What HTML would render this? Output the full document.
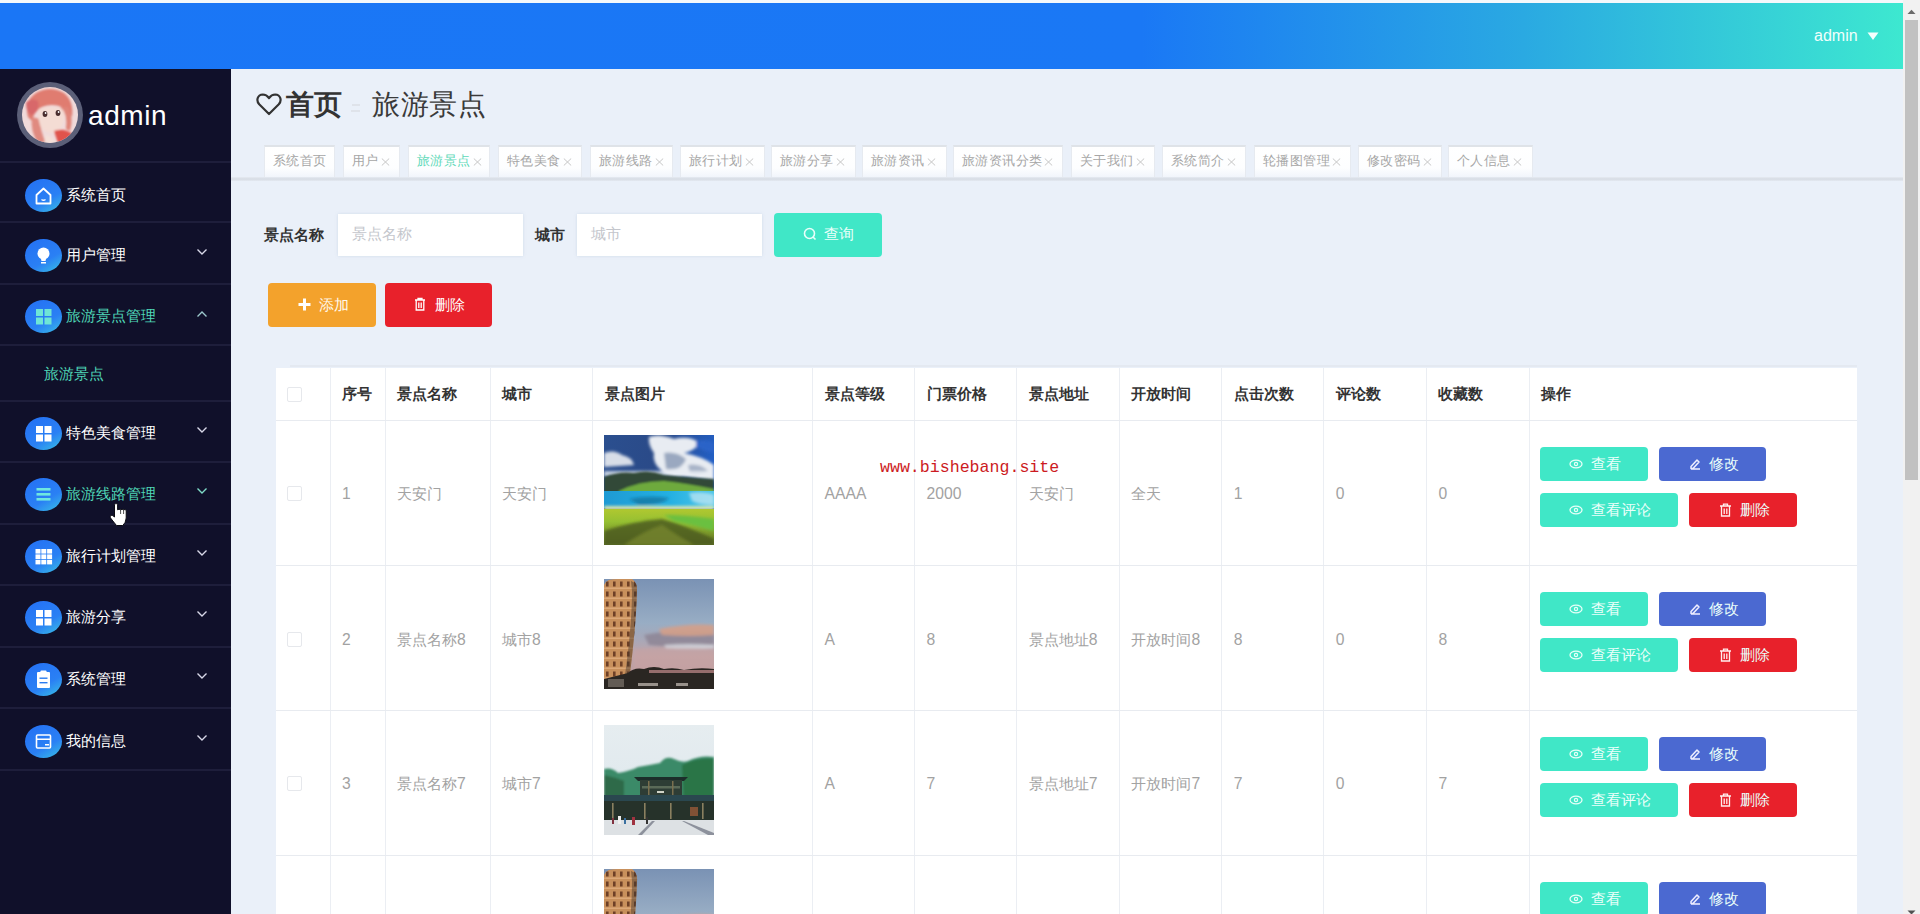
<!DOCTYPE html>
<html><head><meta charset="utf-8">
<style>
*{box-sizing:border-box;margin:0;padding:0}
html,body{width:1920px;height:914px;overflow:hidden}
body{position:relative;background:#eaf0f9;font-family:"Liberation Sans",sans-serif;color:#333}
.a{position:absolute}
#top{left:0;top:0;width:1903px;height:3px;background:#f4f8fb}
#hdr{left:0;top:3px;width:1903px;height:66px;background:linear-gradient(90deg,#1a76f6 0%,#1a78f5 60%,#2aa9e2 80%,#3de8d0 100%)}
#side{left:0;top:69px;width:231px;height:845px;background:#10102a}
.dv{left:0;width:231px;height:2px;background:#1e1e3b}
.ic{left:25px;width:37px;height:33px;border-radius:50%;background:linear-gradient(150deg,#2470f4 0%,#2a80f4 62%,#36b4e8 92%,#3ccce0 100%)}
.ic svg{position:absolute;left:0;top:0}
.mt{left:66px;font-size:15.3px;line-height:20px;color:#fff;white-space:nowrap;font-weight:500}
.mt.on{color:#4fd6b6}
.chev{left:196px}
#sb{left:1903px;top:0;width:17px;height:914px;background:#f1f1f1}
#thumb{left:1905px;top:20px;width:13px;height:460px;background:#c1c1c1}
.bc{font-size:28px;line-height:32px;white-space:nowrap}
.tab{top:145px;height:32px;background:linear-gradient(#fff 0%,#fdfeff 70%,#f1f5fb 100%);border:1px solid #e6eaf0;border-top:2px solid #dfe3e8;border-bottom:none;font-size:13px;letter-spacing:0.4px;line-height:28px;color:#a6a6a6;padding-left:8px;white-space:nowrap}
.tab.on{color:#5fd9b9}
.tab svg{display:inline-block;vertical-align:top;margin-top:11px;margin-left:2px}
#tabline{left:231px;top:177px;width:1672px;height:4px;background:linear-gradient(#e6ebf2,#d6dce4 50%,#e4e9f1)}
.lbl{font-size:15px;font-weight:bold;color:#333;line-height:20px;white-space:nowrap}
.inp{background:#fff;box-shadow:0 0 3px rgba(160,180,210,.35)}
.ph{font-size:15px;color:#c4c6cc;line-height:20px;white-space:nowrap}
.btn{border-radius:4px;color:#fff;font-size:15px;line-height:20px;white-space:nowrap;font-weight:500}
#tbl{left:276px;top:368px;width:1581px;height:546px;background:#fff}
.vl{top:368px;width:1px;height:546px;background:#ebeef3}
.hl{left:276px;width:1581px;height:1px;background:#e8ebf0}
.th{font-size:15px;font-weight:bold;color:#333;line-height:20px;white-space:nowrap}
.td{font-size:15px;color:#a2a2a2;line-height:20px;white-space:nowrap}
.cb{width:15px;height:15px;border:1px solid #e6e8ec;border-radius:2px;background:#fff}
.ab{height:34px;border-radius:4px;color:#eafffa;font-size:14.7px;line-height:34px;white-space:nowrap;font-weight:500}
.ab svg{position:absolute}
.teal{background:#40e7c7}
.blue{background:#4b69d1}
.red{background:#e8212b}
</style></head>
<body>
<div id="top" class="a"></div>
<div id="hdr" class="a"></div>
<div class="a" style="left:1814px;top:26px;color:#f0fffc;font-size:16px;line-height:20px">admin</div>
<svg class="a" style="left:1867px;top:32px" width="12" height="9"><path d="M0.5 0.5 L11.5 0.5 L6 8 Z" fill="#f4fffd"/></svg>
<div id="side" class="a"></div>
<div class="a" style="left:17px;top:82px;width:66px;height:66px;border-radius:50%;background:#5b5f78"></div>
<svg class="a" style="left:22px;top:87px" width="56" height="56" viewBox="0 0 56 56">
<defs><clipPath id="avc"><circle cx="28" cy="28" r="28"/></clipPath><filter id="avb"><feGaussianBlur stdDeviation="1.1"/></filter></defs>
<g clip-path="url(#avc)">
<rect width="56" height="56" fill="#f0dada"/>
<g filter="url(#avb)">
<path d="M6 30 Q2 14 14 6 Q28 -2 42 6 Q52 14 50 30 Q46 22 40 20 Q30 16 20 20 Q12 24 10 34Z" fill="#e07c70"/>
<path d="M4 16 Q8 10 16 14 Q18 24 10 28 Q4 26 4 16Z" fill="#d8686a"/>
<path d="M10 30 Q8 44 16 56 L24 56 Q18 44 18 32Z" fill="#e08a80"/>
<path d="M17 22 Q28 18 42 22 Q44 36 36 44 Q28 48 20 42 Q15 34 17 22Z" fill="#f4dcd4"/>
<path d="M38 20 Q46 26 44 42 L48 44 Q52 30 46 20Z" fill="#e08478"/>
<path d="M32 44 Q42 40 52 48 L56 56 L36 56Z" fill="#e0524c"/>
<path d="M24 48 Q30 50 34 56 L22 56Z" fill="#f4e0d8"/>
</g>
<ellipse cx="23" cy="27" rx="2.4" ry="3" fill="#4a2e30"/>
<ellipse cx="36" cy="26" rx="2.4" ry="3" fill="#4a2e30"/>
<circle cx="23.6" cy="26" r="0.9" fill="#fff"/><circle cx="36.6" cy="25" r="0.9" fill="#fff"/>
</g></svg>
<div class="a" style="left:88px;top:98px;color:#fff;font-size:28px;line-height:36px;letter-spacing:0.6px">admin</div>
<div class="a dv" style="top:161px"></div>
<div class="a dv" style="top:221px"></div>
<div class="a dv" style="top:283px"></div>
<div class="a dv" style="top:344px"></div>
<div class="a dv" style="top:400px"></div>
<div class="a dv" style="top:461px"></div>
<div class="a dv" style="top:523px"></div>
<div class="a dv" style="top:584px"></div>
<div class="a dv" style="top:646px"></div>
<div class="a dv" style="top:707px"></div>
<div class="a dv" style="top:769px"></div>
<div class="a ic" style="top:178.5px"><svg width="37" height="33" viewBox="0 1 37 33"><path d="M11.5 17 L18.5 10.5 L25.5 17 L25.5 25.5 L11.5 25.5 Z" fill="none" stroke="#fff" stroke-width="1.8" stroke-linejoin="round"/><path d="M16.5 21.5 Q18.5 23 20.5 21.5" fill="none" stroke="#fff" stroke-width="1.4"/></svg></div>
<div class="a mt" style="top:185px">系统首页</div>
<div class="a ic" style="top:238.5px"><svg width="37" height="33" viewBox="0 1 37 33"><circle cx="18.5" cy="15.5" r="6" fill="#fff"/><path d="M15.5 19 L21.5 19 L20.5 23 L16.5 23 Z" fill="#fff"/><rect x="16" y="24" width="5" height="1.5" fill="#fff"/></svg></div>
<div class="a mt" style="top:245px">用户管理</div>
<svg class="a chev" style="top:248px" width="12" height="8"><path d="M1.5 1.5 L6 6 L10.5 1.5" fill="none" stroke="#d8d8e8" stroke-width="1.4"/></svg>
<div class="a ic" style="top:299.5px"><svg width="37" height="33"><rect x="11" y="9" width="7" height="7" fill="#6ee6d6"/><rect x="19.5" y="9" width="7" height="7" fill="#6ee6d6"/><rect x="11" y="17.5" width="7" height="7" fill="#6ee6d6"/><rect x="19.5" y="17.5" width="7" height="7" fill="#6ee6d6"/></svg></div>
<div class="a mt on" style="top:306px">旅游景点管理</div>
<svg class="a chev" style="top:310px" width="12" height="8"><path d="M1.5 6.5 L6 2 L10.5 6.5" fill="none" stroke="#9cc8cc" stroke-width="1.4"/></svg>
<div class="a ic" style="top:416.5px"><svg width="37" height="33"><rect x="11" y="9" width="7" height="7" fill="#fff"/><rect x="19.5" y="9" width="7" height="7" fill="#fff"/><rect x="11" y="17.5" width="7" height="7" fill="#fff"/><rect x="19.5" y="17.5" width="7" height="7" fill="#fff"/></svg></div>
<div class="a mt" style="top:423px">特色美食管理</div>
<svg class="a chev" style="top:426px" width="12" height="8"><path d="M1.5 1.5 L6 6 L10.5 1.5" fill="none" stroke="#d8d8e8" stroke-width="1.4"/></svg>
<div class="a ic" style="top:477.5px"><svg width="37" height="33"><rect x="11.5" y="10" width="14" height="2.6" fill="#6ee8e0"/><rect x="11.5" y="15" width="14" height="2.6" fill="#6ee8e0"/><rect x="11.5" y="20" width="14" height="2.6" fill="#6ee8e0"/></svg></div>
<div class="a mt on" style="top:484px">旅游线路管理</div>
<svg class="a chev" style="top:487px" width="12" height="8"><path d="M1.5 1.5 L6 6 L10.5 1.5" fill="none" stroke="#7fdcc8" stroke-width="1.4"/></svg>
<div class="a ic" style="top:539.5px"><svg width="37" height="33"><g fill="#fff"><rect x="10.5" y="9" width="5" height="4.6"/><rect x="16.3" y="9" width="5" height="4.6"/><rect x="22.1" y="9" width="5" height="4.6"/><rect x="10.5" y="14.4" width="5" height="4.6"/><rect x="16.3" y="14.4" width="5" height="4.6"/><rect x="22.1" y="14.4" width="5" height="4.6"/><rect x="10.5" y="19.8" width="5" height="4.6"/><rect x="16.3" y="19.8" width="5" height="4.6"/><rect x="22.1" y="19.8" width="5" height="4.6"/></g></svg></div>
<div class="a mt" style="top:546px">旅行计划管理</div>
<svg class="a chev" style="top:549px" width="12" height="8"><path d="M1.5 1.5 L6 6 L10.5 1.5" fill="none" stroke="#d8d8e8" stroke-width="1.4"/></svg>
<div class="a ic" style="top:600.5px"><svg width="37" height="33"><rect x="11" y="9" width="7" height="7" fill="#fff"/><rect x="19.5" y="9" width="7" height="7" fill="#fff"/><rect x="11" y="17.5" width="7" height="7" fill="#fff"/><rect x="19.5" y="17.5" width="7" height="7" fill="#fff"/></svg></div>
<div class="a mt" style="top:607px">旅游分享</div>
<svg class="a chev" style="top:610px" width="12" height="8"><path d="M1.5 1.5 L6 6 L10.5 1.5" fill="none" stroke="#d8d8e8" stroke-width="1.4"/></svg>
<div class="a ic" style="top:662.5px"><svg width="37" height="33"><rect x="12" y="9" width="13" height="16" rx="1" fill="#fff"/><rect x="15.5" y="7.5" width="6" height="3" rx="0.8" fill="#fff"/><rect x="14.5" y="14.5" width="8" height="1.4" fill="#2a7cf0"/><rect x="14.5" y="19" width="8" height="1.4" fill="#2a7cf0"/></svg></div>
<div class="a mt" style="top:669px">系统管理</div>
<svg class="a chev" style="top:672px" width="12" height="8"><path d="M1.5 1.5 L6 6 L10.5 1.5" fill="none" stroke="#d8d8e8" stroke-width="1.4"/></svg>
<div class="a ic" style="top:724.5px"><svg width="37" height="33" viewBox="0 1 37 33"><rect x="11.5" y="11" width="14" height="13" rx="1" fill="none" stroke="#fff" stroke-width="1.6"/><rect x="11.5" y="14.5" width="14" height="1.5" fill="#fff"/><rect x="20" y="20" width="4" height="1.5" fill="#fff"/></svg></div>
<div class="a mt" style="top:731px">我的信息</div>
<svg class="a chev" style="top:734px" width="12" height="8"><path d="M1.5 1.5 L6 6 L10.5 1.5" fill="none" stroke="#d8d8e8" stroke-width="1.4"/></svg>
<div class="a mt on" style="left:44px;top:364px">旅游景点</div>
<svg class="a" style="left:108px;top:501px" width="20" height="26"><path d="M6.5 3.5 Q8 1.2 9.6 3.5 L9.6 8.8 Q11 7.6 12.6 8.8 Q14 7.6 15.6 8.8 Q17.2 7.8 18.2 9.6 L18.2 17 Q17.8 22 14.8 24.5 L8.5 24.5 Q6 21.5 2.4 16.8 Q1.6 15 3.2 14.4 Q4.6 14 6.5 16 Z" fill="#fff" stroke="#0a0a12" stroke-width="1"/><path d="M12.6 9 L12.6 13 M15.6 9 L15.6 13" stroke="#222" stroke-width="0.8"/></svg>
<svg class="a" style="left:256px;top:93px" width="26" height="23"><path d="M13 21 L3.2 11.3 Q0.8 8.5 1.6 5.4 Q2.8 1.6 6.8 1.5 Q10.5 1.6 13 5 Q15.5 1.6 19.2 1.5 Q23.2 1.6 24.4 5.4 Q25.2 8.5 22.8 11.3 Z" fill="none" stroke="#333" stroke-width="2.2" stroke-linejoin="round"/></svg>
<div class="a bc" style="left:286px;top:89px;font-weight:bold;color:#333">首页</div>
<div class="a" style="left:352px;top:104px;width:8px;height:1.5px;background:#dfe3ea"></div><div class="a" style="left:351px;top:110px;width:9px;height:1.5px;background:#dfe3ea"></div>
<div class="a bc" style="left:372px;top:89px;color:#3a3a3a;letter-spacing:0.5px">旅游景点</div>
<div id="tabline" class="a"></div>
<div class="a tab" style="left:264px;width:71px">系统首页</div>
<div class="a tab" style="left:343px;width:57px">用户<svg width="9" height="8"><path d="M0.8 0.5 L8.2 7.5 M8.2 0.5 L0.8 7.5" stroke="#c6c6c6" stroke-width="1"/></svg></div>
<div class="a tab on" style="left:408px;width:82px">旅游景点<svg width="9" height="8"><path d="M0.8 0.5 L8.2 7.5 M8.2 0.5 L0.8 7.5" stroke="#c6c6c6" stroke-width="1"/></svg></div>
<div class="a tab" style="left:498px;width:84px">特色美食<svg width="9" height="8"><path d="M0.8 0.5 L8.2 7.5 M8.2 0.5 L0.8 7.5" stroke="#c6c6c6" stroke-width="1"/></svg></div>
<div class="a tab" style="left:590px;width:83px">旅游线路<svg width="9" height="8"><path d="M0.8 0.5 L8.2 7.5 M8.2 0.5 L0.8 7.5" stroke="#c6c6c6" stroke-width="1"/></svg></div>
<div class="a tab" style="left:680px;width:85px">旅行计划<svg width="9" height="8"><path d="M0.8 0.5 L8.2 7.5 M8.2 0.5 L0.8 7.5" stroke="#c6c6c6" stroke-width="1"/></svg></div>
<div class="a tab" style="left:771px;width:85px">旅游分享<svg width="9" height="8"><path d="M0.8 0.5 L8.2 7.5 M8.2 0.5 L0.8 7.5" stroke="#c6c6c6" stroke-width="1"/></svg></div>
<div class="a tab" style="left:862px;width:85px">旅游资讯<svg width="9" height="8"><path d="M0.8 0.5 L8.2 7.5 M8.2 0.5 L0.8 7.5" stroke="#c6c6c6" stroke-width="1"/></svg></div>
<div class="a tab" style="left:953px;width:110px">旅游资讯分类<svg width="9" height="8"><path d="M0.8 0.5 L8.2 7.5 M8.2 0.5 L0.8 7.5" stroke="#c6c6c6" stroke-width="1"/></svg></div>
<div class="a tab" style="left:1071px;width:84px">关于我们<svg width="9" height="8"><path d="M0.8 0.5 L8.2 7.5 M8.2 0.5 L0.8 7.5" stroke="#c6c6c6" stroke-width="1"/></svg></div>
<div class="a tab" style="left:1162px;width:84px">系统简介<svg width="9" height="8"><path d="M0.8 0.5 L8.2 7.5 M8.2 0.5 L0.8 7.5" stroke="#c6c6c6" stroke-width="1"/></svg></div>
<div class="a tab" style="left:1254px;width:97px">轮播图管理<svg width="9" height="8"><path d="M0.8 0.5 L8.2 7.5 M8.2 0.5 L0.8 7.5" stroke="#c6c6c6" stroke-width="1"/></svg></div>
<div class="a tab" style="left:1358px;width:84px">修改密码<svg width="9" height="8"><path d="M0.8 0.5 L8.2 7.5 M8.2 0.5 L0.8 7.5" stroke="#c6c6c6" stroke-width="1"/></svg></div>
<div class="a tab" style="left:1448px;width:85px">个人信息<svg width="9" height="8"><path d="M0.8 0.5 L8.2 7.5 M8.2 0.5 L0.8 7.5" stroke="#c6c6c6" stroke-width="1"/></svg></div>
<div class="a lbl" style="left:264px;top:225px">景点名称</div>
<div class="a inp" style="left:338px;top:214px;width:185px;height:42px"></div>
<div class="a ph" style="left:352px;top:224px">景点名称</div>
<div class="a lbl" style="left:535px;top:225px">城市</div>
<div class="a inp" style="left:577px;top:214px;width:185px;height:42px"></div>
<div class="a ph" style="left:591px;top:224px">城市</div>
<div class="a btn teal" style="left:774px;top:213px;width:108px;height:44px"></div>
<svg class="a" style="left:803px;top:227px" width="14" height="15"><circle cx="6.5" cy="6.5" r="5" fill="none" stroke="#e8fffa" stroke-width="1.6"/><path d="M10 10 L12.5 12.5" stroke="#e8fffa" stroke-width="1.6"/></svg>
<div class="a btn" style="left:824px;top:224px;color:#eafffa">查询</div>
<div class="a btn" style="left:268px;top:283px;width:108px;height:44px;background:#f3a22c"></div>
<svg class="a" style="left:297px;top:297px" width="15" height="15"><path d="M7.5 1.5 L7.5 13.5 M1.5 7.5 L13.5 7.5" stroke="#fff" stroke-width="3"/></svg>
<div class="a btn" style="left:319px;top:295px;color:#fff8ec">添加</div>
<div class="a btn" style="left:385px;top:283px;width:107px;height:44px;background:#e8212b"></div>
<svg class="a" style="left:414px;top:297px" width="12" height="14"><path d="M1 3 L11 3 M4 3 L4 1.5 L8 1.5 L8 3 M2.2 3 L2.2 13 L9.8 13 L9.8 3 M4.8 5.5 L4.8 11 M7.2 5.5 L7.2 11" fill="none" stroke="#fff" stroke-width="1.3"/></svg>
<div class="a btn" style="left:435px;top:295px;color:#fff">删除</div>
<div class="a" style="left:290px;top:365px;width:1567px;height:2px;background:#e4e9f1"></div>
<div id="tbl" class="a"></div>
<div class="a vl" style="left:329.5px"></div>
<div class="a vl" style="left:384.5px"></div>
<div class="a vl" style="left:489.5px"></div>
<div class="a vl" style="left:592.2px"></div>
<div class="a vl" style="left:812.0px"></div>
<div class="a vl" style="left:914.0px"></div>
<div class="a vl" style="left:1016.3px"></div>
<div class="a vl" style="left:1118.9px"></div>
<div class="a vl" style="left:1221.3px"></div>
<div class="a vl" style="left:1323.3px"></div>
<div class="a vl" style="left:1425.9px"></div>
<div class="a vl" style="left:1528.5px"></div>
<div class="a hl" style="top:420px"></div>
<div class="a hl" style="top:565px"></div>
<div class="a hl" style="top:710px"></div>
<div class="a hl" style="top:855px"></div>
<div class="a cb" style="left:287px;top:387px"></div>
<div class="a th" style="left:342.0px;top:384px">序号</div>
<div class="a th" style="left:397.0px;top:384px">景点名称</div>
<div class="a th" style="left:502.0px;top:384px">城市</div>
<div class="a th" style="left:604.7px;top:384px">景点图片</div>
<div class="a th" style="left:824.5px;top:384px">景点等级</div>
<div class="a th" style="left:926.5px;top:384px">门票价格</div>
<div class="a th" style="left:1028.8px;top:384px">景点地址</div>
<div class="a th" style="left:1131.4px;top:384px">开放时间</div>
<div class="a th" style="left:1233.8px;top:384px">点击次数</div>
<div class="a th" style="left:1335.8px;top:384px">评论数</div>
<div class="a th" style="left:1438.4px;top:384px">收藏数</div>
<div class="a th" style="left:1541.0px;top:384px">操作</div>
<div class="a cb" style="left:287px;top:486px"></div>
<div class="a td" style="left:342.0px;top:484px"><span style="font-size:15.7px">1</span></div>
<div class="a td" style="left:397.0px;top:484px">天安门</div>
<div class="a td" style="left:502.0px;top:484px">天安门</div>
<div class="a td" style="left:824.5px;top:484px"><span style="font-size:15.7px">AAAA</span></div>
<div class="a td" style="left:926.5px;top:484px"><span style="font-size:15.7px">2000</span></div>
<div class="a td" style="left:1028.8px;top:484px">天安门</div>
<div class="a td" style="left:1131.4px;top:484px">全天</div>
<div class="a td" style="left:1233.8px;top:484px"><span style="font-size:15.7px">1</span></div>
<div class="a td" style="left:1335.8px;top:484px"><span style="font-size:15.7px">0</span></div>
<div class="a td" style="left:1438.4px;top:484px"><span style="font-size:15.7px">0</span></div>
<div class="a cb" style="left:287px;top:632px"></div>
<div class="a td" style="left:342.0px;top:630px"><span style="font-size:15.7px">2</span></div>
<div class="a td" style="left:397.0px;top:630px">景点名称<span style="font-size:15.7px">8</span></div>
<div class="a td" style="left:502.0px;top:630px">城市<span style="font-size:15.7px">8</span></div>
<div class="a td" style="left:824.5px;top:630px"><span style="font-size:15.7px">A</span></div>
<div class="a td" style="left:926.5px;top:630px"><span style="font-size:15.7px">8</span></div>
<div class="a td" style="left:1028.8px;top:630px">景点地址<span style="font-size:15.7px">8</span></div>
<div class="a td" style="left:1131.4px;top:630px">开放时间<span style="font-size:15.7px">8</span></div>
<div class="a td" style="left:1233.8px;top:630px"><span style="font-size:15.7px">8</span></div>
<div class="a td" style="left:1335.8px;top:630px"><span style="font-size:15.7px">0</span></div>
<div class="a td" style="left:1438.4px;top:630px"><span style="font-size:15.7px">8</span></div>
<div class="a cb" style="left:287px;top:776px"></div>
<div class="a td" style="left:342.0px;top:774px"><span style="font-size:15.7px">3</span></div>
<div class="a td" style="left:397.0px;top:774px">景点名称<span style="font-size:15.7px">7</span></div>
<div class="a td" style="left:502.0px;top:774px">城市<span style="font-size:15.7px">7</span></div>
<div class="a td" style="left:824.5px;top:774px"><span style="font-size:15.7px">A</span></div>
<div class="a td" style="left:926.5px;top:774px"><span style="font-size:15.7px">7</span></div>
<div class="a td" style="left:1028.8px;top:774px">景点地址<span style="font-size:15.7px">7</span></div>
<div class="a td" style="left:1131.4px;top:774px">开放时间<span style="font-size:15.7px">7</span></div>
<div class="a td" style="left:1233.8px;top:774px"><span style="font-size:15.7px">7</span></div>
<div class="a td" style="left:1335.8px;top:774px"><span style="font-size:15.7px">0</span></div>
<div class="a td" style="left:1438.4px;top:774px"><span style="font-size:15.7px">7</span></div>
<div class="a" style="left:604px;top:435px;width:110px;height:110px;overflow:hidden"><svg width="110" height="110" viewBox="0 0 110 110">
<defs><filter id="bl1" x="-20%" y="-20%" width="140%" height="140%"><feGaussianBlur stdDeviation="1.6"/></filter>
<filter id="bl2"><feGaussianBlur stdDeviation="0.8"/></filter>
<linearGradient id="lsky" x1="0" y1="0" x2="1" y2="0.3"><stop offset="0" stop-color="#2b4f8f"/><stop offset="0.5" stop-color="#2a4a88"/><stop offset="1" stop-color="#2260c8"/></linearGradient>
<linearGradient id="llake" x1="0" y1="0" x2="1" y2="0"><stop offset="0" stop-color="#1e9ad4"/><stop offset="0.6" stop-color="#24b0e2"/><stop offset="1" stop-color="#50c6e8"/></linearGradient>
<linearGradient id="lgr" x1="0" y1="0" x2="0" y2="1"><stop offset="0" stop-color="#b0c830"/><stop offset="0.35" stop-color="#96c032"/><stop offset="1" stop-color="#5e6e22"/></linearGradient>
</defs>
<rect width="110" height="110" fill="url(#lsky)"/>
<g filter="url(#bl1)">
<path d="M45 2 Q55 -2 70 4 Q85 0 96 8 Q90 16 80 18 Q100 22 110 30 L110 46 Q95 44 80 42 Q65 44 58 36 Q48 28 50 18 Q44 10 45 2Z" fill="#e8ecf2"/>
<path d="M60 18 Q72 16 82 24 Q78 36 62 34Z" fill="#9aa8c0"/>
<path d="M84 30 Q96 28 104 36 Q96 40 86 38Z" fill="#a8b4c8"/>
<path d="M92 6 Q104 4 110 8 L110 18 Q100 16 92 12Z" fill="#2a64c8"/>
<path d="M0 18 Q10 14 18 20 Q28 22 30 30 L0 32Z" fill="#d8dee8"/>
<rect x="0" y="36" width="110" height="6" fill="#e8eef4" opacity="0.8"/>
</g>
<g filter="url(#bl2)">
<path d="M0 42 Q15 36 30 38 Q45 34 60 40 Q80 42 110 44 L110 58 L0 58Z" fill="#304a38"/>
<path d="M15 56 Q35 46 60 46 Q80 48 110 54 L110 58 L15 58Z" fill="#6eaa3c"/>
</g>
<rect x="0" y="56" width="110" height="17" fill="url(#llake)"/>
<g filter="url(#bl1)">
<path d="M25 64 Q45 60 65 63 Q60 70 35 70Z" fill="#16709a" opacity="0.7"/>
<path d="M85 58 Q100 56 110 60 L110 70 Q95 70 88 66Z" fill="#c8e8f4" opacity="0.7"/>
<rect x="0" y="71" width="110" height="4" fill="#d8e4b0"/>
</g>
<rect x="0" y="74" width="110" height="36" fill="url(#lgr)"/>
<g filter="url(#bl1)">
<path d="M60 80 Q80 80 110 84 L110 96 Q90 90 70 86Z" fill="#6ac040"/>
<path d="M0 96 Q30 86 58 84 Q80 90 110 104 L110 110 L0 110Z" fill="#4c5c1c" opacity="0.85"/>
<path d="M20 110 Q40 96 58 90 Q72 100 90 110Z" fill="#7a8a30" opacity="0.7"/>
</g>
</svg></div>
<div class="a" style="left:604px;top:579px;width:110px;height:110px;overflow:hidden"><svg width="110" height="110" viewBox="0 0 110 110">
<defs><filter id="p579b1" x="-20%" y="-20%" width="140%" height="140%"><feGaussianBlur stdDeviation="1.5"/></filter>
<filter id="p579b2"><feGaussianBlur stdDeviation="0.45"/></filter>
<linearGradient id="p579sky" x1="0" y1="0" x2="0" y2="1"><stop offset="0" stop-color="#7a92b4"/><stop offset="0.4" stop-color="#98adc4"/><stop offset="0.55" stop-color="#a8a8b8"/><stop offset="0.7" stop-color="#c0a4a8"/><stop offset="1" stop-color="#b89a9a"/></linearGradient>
<pattern id="p579tw" width="7" height="10" patternUnits="userSpaceOnUse"><rect width="7" height="10" fill="#c8905c"/><rect x="2" y="2.5" width="2.6" height="5" fill="#6e4028"/><rect y="8.5" width="7" height="1.5" fill="#dca878"/></pattern>
</defs>
<rect width="110" height="110" fill="url(#p579sky)"/>
<g filter="url(#p579b1)">
<path d="M40 56 Q70 50 110 52 L110 66 Q80 70 45 66Z" fill="#8a8090" opacity="0.75"/>
<path d="M55 50 Q85 44 110 46 L110 56 Q85 58 58 56Z" fill="#d4a08a" opacity="0.9"/>
<path d="M30 70 Q70 66 110 70 L110 92 L30 92Z" fill="#c8a2a2" opacity="0.6"/>
<path d="M60 66 Q85 64 110 66 L110 69 Q85 70 62 69Z" fill="#e0e4ea" opacity="0.7"/>
</g>
<g filter="url(#p579b2)">
<path d="M0 3 Q4 0 14 0 L28 0 Q34 4 33 12 Q32 50 24 110 L0 110Z" fill="url(#p579tw)"/>
<path d="M27 2 Q34 4 33 12 Q32 50 24 110 L19 110 Q28 50 28 12Z" fill="#40342a" opacity="0.45"/>
<path d="M0 0 L6 0 Q2 2 0 6Z" fill="#7a92b4"/>
</g>
<g filter="url(#p579b2)">
<path d="M24 94 Q30 88 40 90 Q50 86 60 90 Q70 88 80 91 Q95 88 110 90 L110 110 L0 110 L0 100Z" fill="#2c2622"/>
<rect x="45" y="91" width="65" height="3" fill="#b08080" opacity="0.8"/>
<rect x="34" y="104" width="20" height="3" fill="#c8c0b8" opacity="0.7"/>
<rect x="72" y="104" width="12" height="3" fill="#c8c0b8" opacity="0.7"/>
<rect x="4" y="100" width="16" height="8" fill="#8a8078" opacity="0.6"/>
</g>
</svg></div>
<div class="a" style="left:604px;top:725px;width:110px;height:110px;overflow:hidden"><svg width="110" height="110" viewBox="0 0 110 110">
<defs><filter id="tb1" x="-20%" y="-20%" width="140%" height="140%"><feGaussianBlur stdDeviation="1.2"/></filter>
<filter id="tb2"><feGaussianBlur stdDeviation="0.45"/></filter>
<linearGradient id="tsky" x1="0" y1="0" x2="0" y2="1"><stop offset="0" stop-color="#e6edf0"/><stop offset="1" stop-color="#dce6ec"/></linearGradient>
</defs>
<rect width="110" height="110" fill="url(#tsky)"/>
<g filter="url(#tb1)">
<path d="M0 44 Q8 42 14 48 Q26 46 34 42 Q46 40 56 38 Q62 30 70 34 Q78 38 84 36 Q96 30 110 32 L110 80 L0 80Z" fill="#3a8a68"/>
<path d="M78 40 Q95 32 110 34 L110 80 L80 80Z" fill="#2a7446"/>
<path d="M0 50 Q10 52 20 56 L20 80 L0 80Z" fill="#2e6a48"/>
</g>
<g filter="url(#tb2)">
<path d="M30 52 L84 52 L80 56 L34 56Z" fill="#1e2e2a"/>
<rect x="36" y="55" width="42" height="18" fill="#2e3c34"/>
<rect x="38" y="61" width="38" height="2.5" fill="#5a6a58"/>
<rect x="44" y="56" width="1.5" height="16" fill="#7a7050"/><rect x="68" y="56" width="1.5" height="16" fill="#7a7050"/>
<rect x="53" y="66" width="7" height="2" fill="#d0d4c8"/>
<path d="M0 70 L110 70 L110 76 L0 76Z" fill="#2a4650"/>
<rect x="0" y="76" width="110" height="20" fill="#26302a"/>
<rect x="8" y="78" width="1.6" height="16" fill="#8a8060"/><rect x="40" y="78" width="1.6" height="16" fill="#8a8060"/>
<rect x="66" y="78" width="1.6" height="16" fill="#8a8060"/><rect x="98" y="78" width="1.6" height="16" fill="#8a8060"/>
<rect x="86" y="82" width="8" height="9" fill="#a8603a" opacity="0.7"/>
</g>
<rect x="0" y="95" width="110" height="15" fill="#dde1e4"/>
<g filter="url(#tb2)">
<path d="M34 110 L48 96 L51 96 L38 110Z" fill="#4a5060" opacity="0.55"/>
<path d="M80 96 L110 108 L110 110 L104 110 L78 96Z" fill="#4a5060" opacity="0.55"/>
<rect x="14" y="91" width="3" height="8" fill="#f0f0f0"/>
<rect x="20" y="93" width="2" height="6" fill="#3a70a0"/>
<rect x="28" y="92" width="3" height="8" fill="#a03040"/>
<rect x="42" y="92" width="2" height="7" fill="#303030"/>
<rect x="8" y="93" width="2" height="6" fill="#803040"/>
</g>
</svg></div>
<div class="a" style="left:604px;top:869px;width:110px;height:110px;overflow:hidden"><svg width="110" height="110" viewBox="0 0 110 110">
<defs><filter id="p869b1" x="-20%" y="-20%" width="140%" height="140%"><feGaussianBlur stdDeviation="1.5"/></filter>
<filter id="p869b2"><feGaussianBlur stdDeviation="0.45"/></filter>
<linearGradient id="p869sky" x1="0" y1="0" x2="0" y2="1"><stop offset="0" stop-color="#7a92b4"/><stop offset="0.4" stop-color="#98adc4"/><stop offset="0.55" stop-color="#a8a8b8"/><stop offset="0.7" stop-color="#c0a4a8"/><stop offset="1" stop-color="#b89a9a"/></linearGradient>
<pattern id="p869tw" width="7" height="10" patternUnits="userSpaceOnUse"><rect width="7" height="10" fill="#c8905c"/><rect x="2" y="2.5" width="2.6" height="5" fill="#6e4028"/><rect y="8.5" width="7" height="1.5" fill="#dca878"/></pattern>
</defs>
<rect width="110" height="110" fill="url(#p869sky)"/>
<g filter="url(#p869b1)">
<path d="M40 56 Q70 50 110 52 L110 66 Q80 70 45 66Z" fill="#8a8090" opacity="0.75"/>
<path d="M55 50 Q85 44 110 46 L110 56 Q85 58 58 56Z" fill="#d4a08a" opacity="0.9"/>
<path d="M30 70 Q70 66 110 70 L110 92 L30 92Z" fill="#c8a2a2" opacity="0.6"/>
<path d="M60 66 Q85 64 110 66 L110 69 Q85 70 62 69Z" fill="#e0e4ea" opacity="0.7"/>
</g>
<g filter="url(#p869b2)">
<path d="M0 3 Q4 0 14 0 L28 0 Q34 4 33 12 Q32 50 24 110 L0 110Z" fill="url(#p869tw)"/>
<path d="M27 2 Q34 4 33 12 Q32 50 24 110 L19 110 Q28 50 28 12Z" fill="#40342a" opacity="0.45"/>
<path d="M0 0 L6 0 Q2 2 0 6Z" fill="#7a92b4"/>
</g>
<g filter="url(#p869b2)">
<path d="M24 94 Q30 88 40 90 Q50 86 60 90 Q70 88 80 91 Q95 88 110 90 L110 110 L0 110 L0 100Z" fill="#2c2622"/>
<rect x="45" y="91" width="65" height="3" fill="#b08080" opacity="0.8"/>
<rect x="34" y="104" width="20" height="3" fill="#c8c0b8" opacity="0.7"/>
<rect x="72" y="104" width="12" height="3" fill="#c8c0b8" opacity="0.7"/>
<rect x="4" y="100" width="16" height="8" fill="#8a8078" opacity="0.6"/>
</g>
</svg></div>
<div class="a ab teal" style="left:1540px;top:447px;width:108px"><svg width="14" height="10" style="left:29px;top:12px"><ellipse cx="7" cy="5" rx="6" ry="3.8" fill="none" stroke="#e6fff8" stroke-width="1.3"/><circle cx="7" cy="5" r="1.6" fill="none" stroke="#e6fff8" stroke-width="1.2"/></svg><span class="a" style="left:51px;top:0">查看</span></div>
<div class="a ab blue" style="left:1659px;top:447px;width:107px"><svg width="13" height="13" style="left:30px;top:10px"><path d="M2 9.5 L8 3 L10 5 L4 11.5 L2 11.5 Z M2 12 L11 12" fill="none" stroke="#eef" stroke-width="1.5" stroke-linejoin="round"/></svg><span class="a" style="left:50px;top:0">修改</span></div>
<div class="a ab teal" style="left:1540px;top:493px;width:138px"><svg width="14" height="10" style="left:29px;top:12px"><ellipse cx="7" cy="5" rx="6" ry="3.8" fill="none" stroke="#e6fff8" stroke-width="1.3"/><circle cx="7" cy="5" r="1.6" fill="none" stroke="#e6fff8" stroke-width="1.2"/></svg><span class="a" style="left:51px;top:0">查看评论</span></div>
<div class="a ab red" style="left:1689px;top:493px;width:108px"><svg width="13" height="14" style="left:30px;top:10px"><path d="M1 3 L12 3 M4.5 3 L4.5 1.2 L8.5 1.2 L8.5 3 M2.5 3 L2.5 13 L10.5 13 L10.5 3 M5.2 5.5 L5.2 11 M7.8 5.5 L7.8 11" fill="none" stroke="#ffeeee" stroke-width="1.3"/></svg><span class="a" style="left:51px;top:0">删除</span></div>
<div class="a ab teal" style="left:1540px;top:592px;width:108px"><svg width="14" height="10" style="left:29px;top:12px"><ellipse cx="7" cy="5" rx="6" ry="3.8" fill="none" stroke="#e6fff8" stroke-width="1.3"/><circle cx="7" cy="5" r="1.6" fill="none" stroke="#e6fff8" stroke-width="1.2"/></svg><span class="a" style="left:51px;top:0">查看</span></div>
<div class="a ab blue" style="left:1659px;top:592px;width:107px"><svg width="13" height="13" style="left:30px;top:10px"><path d="M2 9.5 L8 3 L10 5 L4 11.5 L2 11.5 Z M2 12 L11 12" fill="none" stroke="#eef" stroke-width="1.5" stroke-linejoin="round"/></svg><span class="a" style="left:50px;top:0">修改</span></div>
<div class="a ab teal" style="left:1540px;top:638px;width:138px"><svg width="14" height="10" style="left:29px;top:12px"><ellipse cx="7" cy="5" rx="6" ry="3.8" fill="none" stroke="#e6fff8" stroke-width="1.3"/><circle cx="7" cy="5" r="1.6" fill="none" stroke="#e6fff8" stroke-width="1.2"/></svg><span class="a" style="left:51px;top:0">查看评论</span></div>
<div class="a ab red" style="left:1689px;top:638px;width:108px"><svg width="13" height="14" style="left:30px;top:10px"><path d="M1 3 L12 3 M4.5 3 L4.5 1.2 L8.5 1.2 L8.5 3 M2.5 3 L2.5 13 L10.5 13 L10.5 3 M5.2 5.5 L5.2 11 M7.8 5.5 L7.8 11" fill="none" stroke="#ffeeee" stroke-width="1.3"/></svg><span class="a" style="left:51px;top:0">删除</span></div>
<div class="a ab teal" style="left:1540px;top:737px;width:108px"><svg width="14" height="10" style="left:29px;top:12px"><ellipse cx="7" cy="5" rx="6" ry="3.8" fill="none" stroke="#e6fff8" stroke-width="1.3"/><circle cx="7" cy="5" r="1.6" fill="none" stroke="#e6fff8" stroke-width="1.2"/></svg><span class="a" style="left:51px;top:0">查看</span></div>
<div class="a ab blue" style="left:1659px;top:737px;width:107px"><svg width="13" height="13" style="left:30px;top:10px"><path d="M2 9.5 L8 3 L10 5 L4 11.5 L2 11.5 Z M2 12 L11 12" fill="none" stroke="#eef" stroke-width="1.5" stroke-linejoin="round"/></svg><span class="a" style="left:50px;top:0">修改</span></div>
<div class="a ab teal" style="left:1540px;top:783px;width:138px"><svg width="14" height="10" style="left:29px;top:12px"><ellipse cx="7" cy="5" rx="6" ry="3.8" fill="none" stroke="#e6fff8" stroke-width="1.3"/><circle cx="7" cy="5" r="1.6" fill="none" stroke="#e6fff8" stroke-width="1.2"/></svg><span class="a" style="left:51px;top:0">查看评论</span></div>
<div class="a ab red" style="left:1689px;top:783px;width:108px"><svg width="13" height="14" style="left:30px;top:10px"><path d="M1 3 L12 3 M4.5 3 L4.5 1.2 L8.5 1.2 L8.5 3 M2.5 3 L2.5 13 L10.5 13 L10.5 3 M5.2 5.5 L5.2 11 M7.8 5.5 L7.8 11" fill="none" stroke="#ffeeee" stroke-width="1.3"/></svg><span class="a" style="left:51px;top:0">删除</span></div>
<div class="a ab teal" style="left:1540px;top:882px;width:108px"><svg width="14" height="10" style="left:29px;top:12px"><ellipse cx="7" cy="5" rx="6" ry="3.8" fill="none" stroke="#e6fff8" stroke-width="1.3"/><circle cx="7" cy="5" r="1.6" fill="none" stroke="#e6fff8" stroke-width="1.2"/></svg><span class="a" style="left:51px;top:0">查看</span></div>
<div class="a ab blue" style="left:1659px;top:882px;width:107px"><svg width="13" height="13" style="left:30px;top:10px"><path d="M2 9.5 L8 3 L10 5 L4 11.5 L2 11.5 Z M2 12 L11 12" fill="none" stroke="#eef" stroke-width="1.5" stroke-linejoin="round"/></svg><span class="a" style="left:50px;top:0">修改</span></div>
<div class="a" style="left:880px;top:458px;font-family:'Liberation Mono',monospace;font-size:16.6px;line-height:20px;color:#cc1a22;white-space:nowrap">www.bishebang.site</div>
<div id="sb" class="a"></div>
<div id="thumb" class="a"></div>
<svg class="a" style="left:1907px;top:9px" width="9" height="6"><path d="M0.5 5 L4.5 0.8 L8.5 5Z" fill="#6a6a6a"/></svg>
<svg class="a" style="left:1907px;top:910px" width="9" height="5"><path d="M0.5 0.5 L8.5 0.5 L4.5 4.5Z" fill="#505050"/></svg>
</body></html>
